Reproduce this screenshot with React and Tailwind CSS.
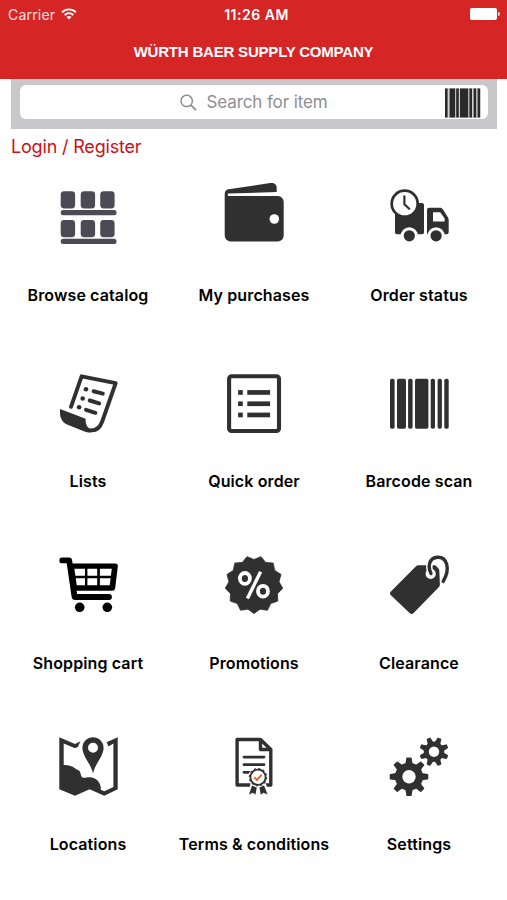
const INK = '#303030'

// ─── Icon (shared 68px canvas) ────────────────────────────────────
function Icon({ children }) {
  return (
    <svg width="68" height="68" viewBox="0 0 68 68" fill={INK} className="block shrink-0">
      {children}
    </svg>
  )
}

// ─── Catalog / wallet / truck ─────────────────────────────────────
function CatalogIcon() {
  return (
    <Icon>
      <g fill="#4b4a55">
        {[10.3, 39].map(y => (
          <g key={y}>
            {[6.7, 26.7, 46.2].map(x => (
              <rect key={x} x={x} y={y} width="14.4" height="17.2" rx="3.4" />
            ))}
            <rect x="6.7" y={y + 18.8} width="55.8" height="5.2" rx="2.5" />
          </g>
        ))}
      </g>
    </Icon>
  )
}

function WalletIcon() {
  return (
    <Icon>
      <path d="M4.7 13C4.7 10.4 6 8.7 8.6 8.2L50.3 2.1C54 1.6 56.7 3.4 56.7 6.6V10.9L8.6 12.6C7.4 12.7 7.4 14.9 8.8 14.9H57.7A6 6 0 0 1 63.7 20.9V54.4A6 6 0 0 1 57.7 60.4H10.7A6 6 0 0 1 4.7 54.4Z" />
      <circle cx="54.3" cy="38" r="4.8" fill="#fff" />
    </Icon>
  )
}

function TruckIcon() {
  return (
    <Icon>
      <rect x="10" y="22" width="29" height="31.3" rx="2" />
      <path d="M42 28.7A2 2 0 0 1 44 26.7H55C56.3 26.7 57.2 27.2 57.9 28.3L63 36.6C63.5 37.4 63.7 38 63.7 39V51.3A2 2 0 0 1 61.7 53.3H42Z" />
      <path d="M48 31.3H54.6Q55.3 31.3 55.8 32L59.6 37.4V40.5H48Z" fill="#fff" />
      {[24.3, 51.1].map(cx => (
        <g key={cx}>
          <circle cx={cx} cy="54.8" r="8.6" fill="#fff" />
          <circle cx={cx} cy="54.8" r="5.6" />
        </g>
      ))}
      <circle cx="19.7" cy="22.7" r="13" fill="#fff" stroke={INK} strokeWidth="2.7" />
      <path d="M19.4 15.3V23.2L24.2 27.8" fill="none" stroke={INK} strokeWidth="2.2" strokeLinecap="round" strokeLinejoin="round" />
    </Icon>
  )
}

// ─── Lists / quick order / barcode ────────────────────────────────
function ListsIcon() {
  return (
    <Icon>
      <g fill="none" stroke={INK} strokeLinecap="round" strokeLinejoin="round">
        <path d="M17 39.8L27.6 9.3L61.7 16.2L48.2 54.5C46 60.5 42.5 64 36.7 63.3" strokeWidth="3.9" />
        <path d="M39.6 24.3L48.8 26.6M35.7 33.5L45.2 36.4M32 42.9L41.4 45.8" strokeWidth="4" />
      </g>
      <circle cx="32" cy="22.2" r="2.3" />
      <circle cx="28.7" cy="31.5" r="2.3" />
      <circle cx="25.1" cy="40.3" r="2.3" />
      <path d="M6.1 42L31.6 51.8C31.4 57 33 61.3 38 62.7L37 65.5C34 65.5 32 65 29.3 63.9L13.6 57.8C8 55.5 5.2 50 6.1 42Z" />
    </Icon>
  )
}

function QuickOrderIcon() {
  return (
    <Icon>
      <rect x="9.1" y="9.2" width="49.9" height="54.8" rx="2.5" fill="none" stroke={INK} strokeWidth="4.1" />
      {[23.1, 34.4, 45.6].map(y => (
        <g key={y}>
          <rect x="18.1" y={y} width="4.7" height="4.7" />
          <rect x="27.3" y={y} width="22.8" height="4.7" />
        </g>
      ))}
    </Icon>
  )
}

const BARS = [
  [5, 4.6], [12, 9], [23.1, 4.5], [30, 13.4], [45.7, 4.3], [52.6, 4.3], [59.3, 4.4],
]

function BarcodeIcon() {
  return (
    <Icon>
      {BARS.map(([x, w]) => (
        <rect key={x} x={x} y="11.7" width={w} height="50" rx="1.8" />
      ))}
    </Icon>
  )
}

// ─── Cart / promotions / clearance ────────────────────────────────
function CartIcon() {
  return (
    <svg width="68" height="68" viewBox="0 0 68 68" fill="#000" className="block shrink-0">
      <path d="M8.2 11.4H15.2L20.6 48H55" fill="none" stroke="#000" strokeWidth="5.8" strokeLinecap="round" strokeLinejoin="round" />
      <path d="M17 14.4H61.2Q64.2 14.4 63.8 17.4L61.2 39.2Q60.8 41.8 58.2 41.8H18Z" />
      <path d="M20.4 19.8H31V26.8H21.4ZM33.4 19.8H43.2V26.8H33.4ZM45.9 19.8H57.8L56.9 26.8H45.9ZM21.8 29.3H31V36.2H22.7ZM33.4 29.3H43.2V36.2H33.4ZM45.9 29.3H56.6L55.7 36.2H45.9Z" fill="#fff" />
      <circle cx="25.7" cy="58.3" r="4.8" />
      <circle cx="53.3" cy="58.3" r="4.8" />
    </svg>
  )
}

// 13-point burst with one point straight down
const BURST = Array.from({ length: 26 }, (_, i) => {
  const r = i % 2 ? 25.2 : 28.9
  const a = Math.PI / 2 + (i * Math.PI) / 13
  return `${(34 + r * Math.cos(a)).toFixed(2)},${(35.7 + r * Math.sin(a)).toFixed(2)}`
}).join(' ')

function PromoIcon() {
  return (
    <Icon>
      <polygon points={BURST} stroke={INK} strokeWidth="0.8" strokeLinejoin="round" />
      <g fill="none" stroke="#fff">
        <ellipse cx="24.9" cy="29.4" rx="5" ry="5.4" strokeWidth="3.8" />
        <ellipse cx="43" cy="42.2" rx="5" ry="5.4" strokeWidth="3.8" />
        <path d="M40.6 22.8L27.4 49.4" strokeWidth="3.4" />
      </g>
    </Icon>
  )
}

function TagIcon() {
  return (
    <Icon>
      <path d="M31 17.2Q32 16.2 33.4 16.2H49.4Q50.6 16.2 51.5 17.2L53.4 19.4Q54.2 20.4 54.3 21.6L54.9 35.6Q55 37 54 38L28.6 63.9Q26.6 65.9 24.6 63.9L5.9 46.2Q4 44.4 5.9 42.5Z" />
      <circle cx="45.7" cy="24.8" r="5.1" fill="#fff" />
      <g fill="none" strokeLinecap="round">
        <path d="M46 24.6C42.8 18 43.6 8.7 52.6 8.2C61.5 7.8 66 19 58.2 32.4" stroke="#fff" strokeWidth="6.4" />
        <path d="M46 24.6C42.8 18 43.6 8.7 52.6 8.2C61.5 7.8 66 19 58.2 32.4" stroke={INK} strokeWidth="3.4" />
      </g>
    </Icon>
  )
}

// ─── Map / terms / gears ──────────────────────────────────────────
function MapIcon() {
  return (
    <Icon>
      <path d="M5.3 7.3L21 14L26.4 11.3L24 16.8L21 18.3L9.7 13.5V35C14.5 34.8 18.5 36 21.3 38.5C22.5 39.6 24.4 39.6 25.6 41.2C27.2 43.5 26.4 46 28.6 47.5C31 48.5 33.2 46.8 37.7 47.5C43.8 48.6 47.2 54 46.8 59.7L50.3 61.2L59.4 57V13.6L54.5 16.5L52.6 12.2L63.7 7.3V59.2L50.3 65.8L35.6 59.2L21 65.8L5.3 59.2Z" />
      <path fillRule="evenodd" d="M39 43.6C37.6 34.6 28.4 26.5 28.4 17.8A10.6 10.6 0 0 1 49.6 17.8C49.6 26.5 40.4 34.6 39 43.6ZM39 12.8A5 5 0 1 0 39 22.8A5 5 0 1 0 39 12.8Z" />
    </Icon>
  )
}

function TermsIcon() {
  return (
    <Icon>
      <g fill="none" stroke={INK} strokeLinejoin="round">
        <path d="M40.5 9.5H17.1V55H50.8V19.5L40.5 9.5V19.5H50.8" strokeWidth="3.4" />
        <path d="M24 27.1H44M24 34.7H44M24 42.3H30" strokeWidth="2.8" strokeLinecap="round" />
      </g>
      <circle cx="38" cy="47.2" r="10" fill="#fff" />
      <path d="M30.5 54H46L49.5 66H27Z" fill="#fff" />
      <path d="M32 55.6L36.8 57.6L35.4 64.8L33 62.8L29 64.4ZM44 55.6L39.4 57.6L40.8 64.8L43.4 62.8L47.6 64.4Z" />
      <circle cx="38" cy="47.2" r="7.6" fill="#fff" stroke={INK} strokeWidth="1.8" />
      <circle cx="38" cy="47.2" r="8.6" fill="none" stroke={INK} strokeWidth="1.2" strokeDasharray="2.25 2.25" />
      <path d="M34.2 47.3L37 50L41.8 44.6" fill="none" stroke="#e8622c" strokeWidth="1.9" />
    </Icon>
  )
}

function Gear({ cx, cy, r, body, hole, tooth, turn = 0 }) {
  return (
    <g transform={`translate(${cx} ${cy}) rotate(${turn})`}>
      {[0, 45, 90, 135, 180, 225, 270, 315].map(a => (
        <path
          key={a}
          transform={`rotate(${a})`}
          d={`M${-tooth - 0.9} ${-body + 1.5}L${-tooth} ${-r + 0.7}Q${-tooth} ${-r} ${-tooth + 0.7} ${-r}H${tooth - 0.7}Q${tooth} ${-r} ${tooth} ${-r + 0.7}L${tooth + 0.9} ${-body + 1.5}Z`}
        />
      ))}
      <circle r={body} />
      <circle r={hole} fill="#fff" />
    </g>
  )
}

function GearsIcon() {
  return (
    <Icon>
      <Gear cx={24} cy={46.7} r={19.3} body={14} hole={6.7} tooth={2.7} />
      <Gear cx={49} cy={21.7} r={14.6} body={10.2} hole={5.2} tooth={2.1} turn={22.5} />
    </Icon>
  )
}

// ─── StatusBar ────────────────────────────────────────────────────
function StatusBar() {
  return (
    <div className="grid h-7 grid-cols-3 items-center pl-2 pr-[7px] text-[14px] text-white">
      <div className="flex items-center gap-[6px]">
        <span className="tracking-[0.2px] text-white/85">Carrier</span>
        <svg width="16" height="12" viewBox="0 0 16 12" fill="none" stroke="#fff" strokeWidth="1.9">
          <path d="M1 4.4C5 0.4 11 0.4 15 4.4M3.6 7C6.2 4.6 9.8 4.6 12.4 7" />
          <path d="M8 11.4L5.5 8.9Q8 7 10.5 8.9Z" fill="#fff" stroke="none" />
        </svg>
      </div>
      <span className="pl-[5px] text-center text-[14px] font-semibold tracking-[0.5px] whitespace-nowrap">11:26 AM</span>
      <div className="flex items-center justify-end gap-px">
        <span className="h-3 w-[27px] rounded-[2px] bg-white" />
        <span className="h-1 w-[2px] rounded-r-full bg-white/80" />
      </div>
    </div>
  )
}

// ─── SearchBar ────────────────────────────────────────────────────
const MINI_BARS = [
  [0, 1.8], [4.6, 4.7], [11.2, 1.8], [15, 7.4], [24.4, 1.8], [28.6, 1.8], [32.6, 1.8],
]

function SearchBar() {
  return (
    <div className="mr-[10px] ml-[11px] h-[50px] bg-[#c8c8cb] px-[9px] pt-[6px]">
      <div className="relative flex h-[34px] items-center justify-center rounded-md bg-white text-[#8e8e93]">
        <svg width="17" height="17" viewBox="0 0 17 17" fill="none" stroke="#8e8e93" strokeWidth="1.5" className="mr-[9px]">
          <circle cx="6.7" cy="6.9" r="5.7" />
          <path d="M10.9 11.1L16 16.2" strokeWidth="1.8" />
        </svg>
        <span className="pt-[2px] text-[17px] tracking-[-0.1px]">Search for item</span>
        <svg width="36" height="30" viewBox="0 0 36 30" fill="#2a2a2a" className="absolute top-[2.5px] right-[7px]">
          <rect width="35.2" height="30" fill="#9a9a9a" opacity="0.45" />
          {MINI_BARS.map(([x, w]) => (
            <rect key={x} x={x} y="0.5" width={w + 0.8} height="29" />
          ))}
        </svg>
      </div>
    </div>
  )
}

// ─── Menu ─────────────────────────────────────────────────────────
const ITEMS = [
  { label: 'Browse catalog',     icon: CatalogIcon },
  { label: 'My purchases',       icon: WalletIcon },
  { label: 'Order status',       icon: TruckIcon },
  { label: 'Lists',              icon: ListsIcon },
  { label: 'Quick order',        icon: QuickOrderIcon },
  { label: 'Barcode scan',       icon: BarcodeIcon },
  { label: 'Shopping cart',      icon: CartIcon },
  { label: 'Promotions',         icon: PromoIcon },
  { label: 'Clearance',          icon: TagIcon },
  { label: 'Locations',          icon: MapIcon },
  { label: 'Terms & conditions', icon: TermsIcon },
  { label: 'Settings',           icon: GearsIcon },
]

export default function App() {
  return (
    <div className="h-[900px] w-[507px] overflow-hidden bg-white font-['Inter',sans-serif]">
      <header className="h-[79px] bg-[#d52525]">
        <StatusBar />
        <h1 className="mt-[14px] text-center font-['Liberation_Sans',sans-serif] text-[15px] leading-5 font-bold tracking-[-0.2px] text-white">
          WÜRTH BAER SUPPLY COMPANY
        </h1>
      </header>
      <SearchBar />
      <a className="ml-[11px] block h-[52px] pt-[6px] text-[18px] leading-6 tracking-[-0.18px] text-[#cb1017]">Login / Register</a>
      <main className="ml-[5px] grid grid-cols-[166px_166px_164px] grid-rows-[186px_182px_181px_120px]">
        {ITEMS.map(({ label, icon: Glyph }) => (
          <div key={label} className="flex flex-col items-center gap-9">
            <Glyph />
            <span className="text-[16px] leading-5 font-semibold tracking-[0.12px] whitespace-nowrap text-black">{label}</span>
          </div>
        ))}
      </main>
    </div>
  )
}
